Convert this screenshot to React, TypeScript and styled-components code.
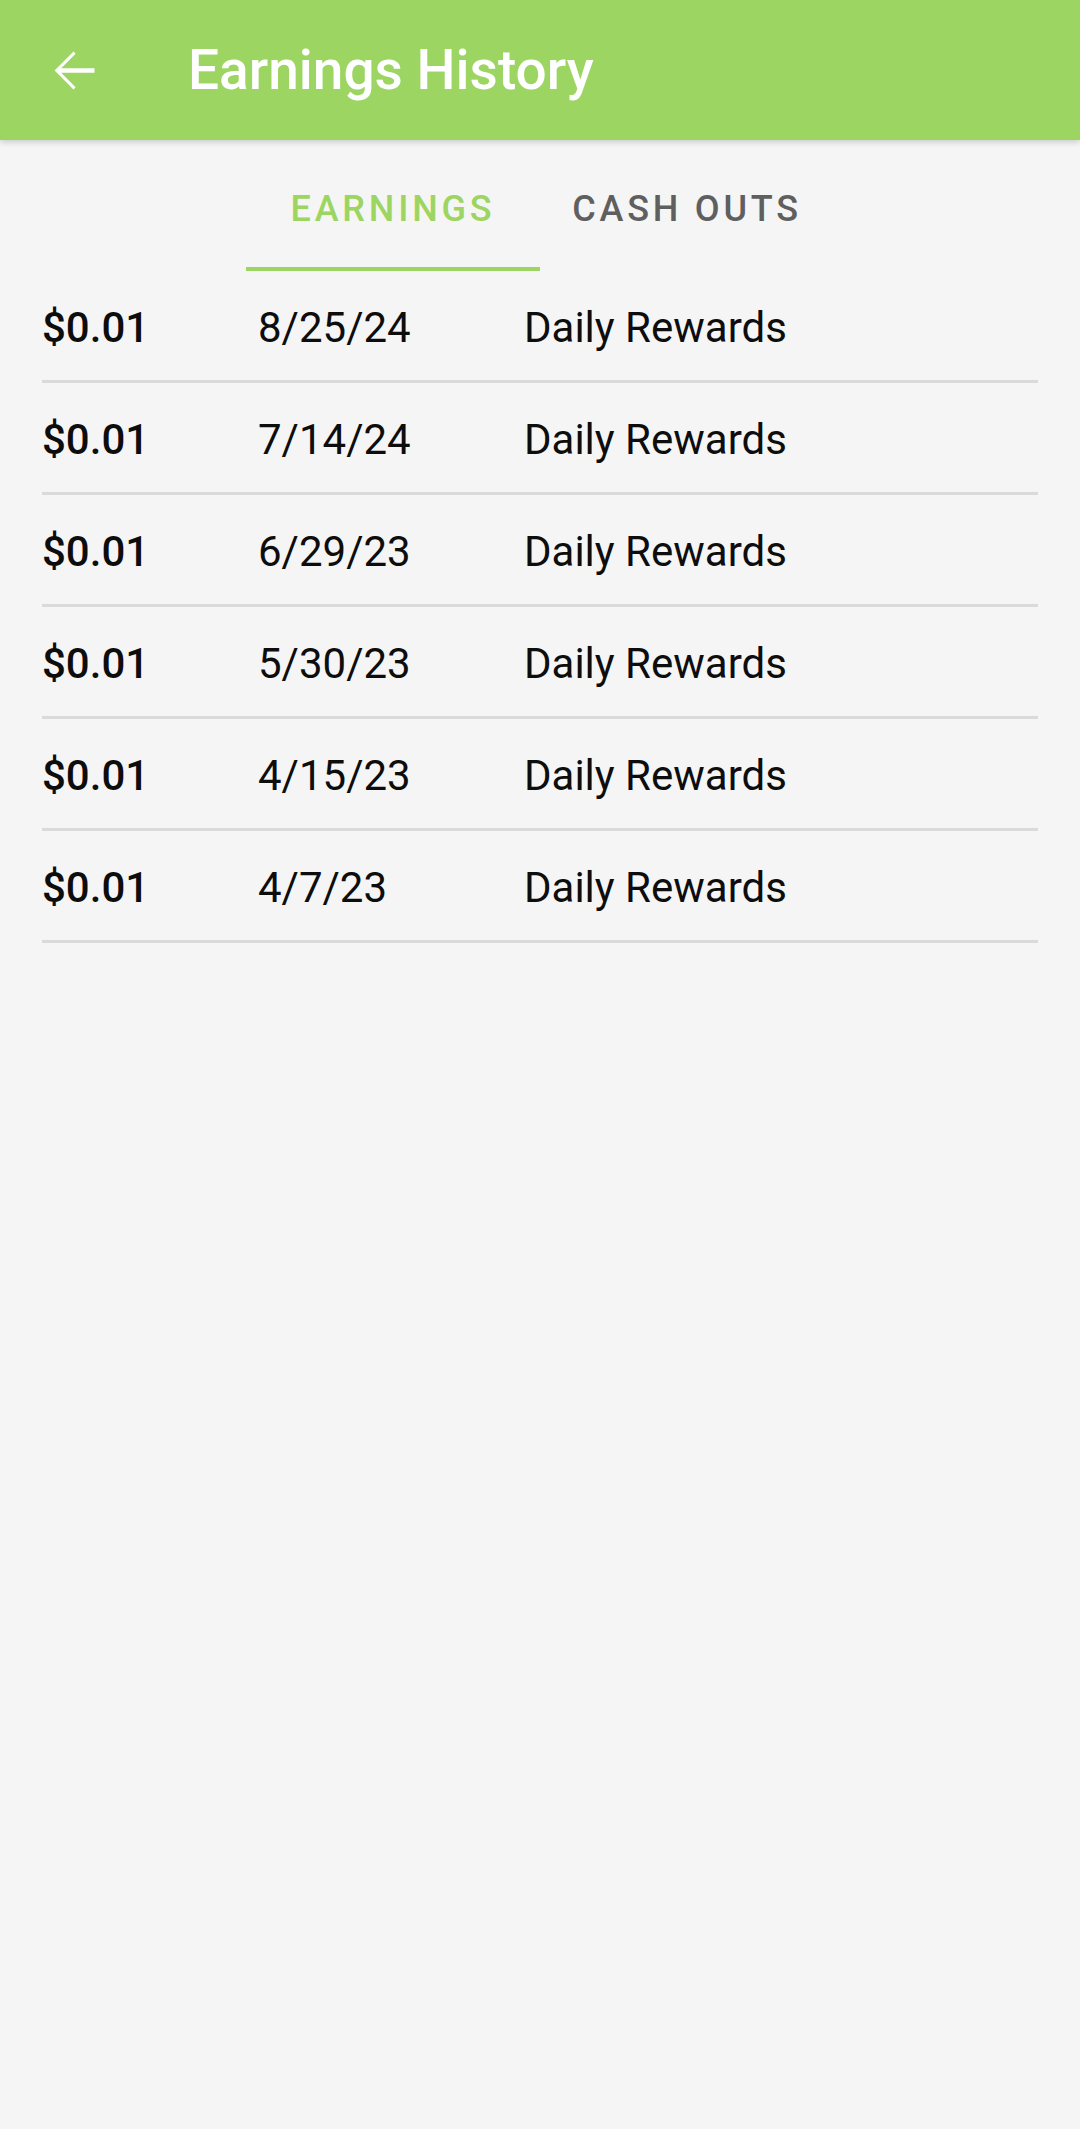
import { FC } from "react";
import styled, { createGlobalStyle } from "styled-components";

const GlobalStyle = createGlobalStyle`
  html, body {
    margin: 0;
    padding: 0;
    background: #f5f5f5;
    font-family: Roboto, "Noto Sans", "Liberation Sans", sans-serif;
  }
`;

const GREEN = "#9cd561";

interface Earning {
  amount: string;
  date: string;
  source: string;
}

const earnings: Earning[] = [
  { amount: "$0.01", date: "8/25/24", source: "Daily Rewards" },
  { amount: "$0.01", date: "7/14/24", source: "Daily Rewards" },
  { amount: "$0.01", date: "6/29/23", source: "Daily Rewards" },
  { amount: "$0.01", date: "5/30/23", source: "Daily Rewards" },
  { amount: "$0.01", date: "4/15/23", source: "Daily Rewards" },
  { amount: "$0.01", date: "4/7/23", source: "Daily Rewards" },
];

const BackIcon: FC = () => (
  <svg width="63" height="63" viewBox="0 0 24 24" fill="#ffffff">
    <path d="M20 11.1H7.3l5.5-5.5L12 4.8 4.8 12l7.2 7.2 0.8-0.8-5.5-5.5H20v-1.8z" />
  </svg>
);

const App: FC = () => {
  return (
    <Page>
      <GlobalStyle />
      <AppBar>
        <BackButton aria-label="Back">
          <BackIcon />
        </BackButton>
        <Title>Earnings History</Title>
      </AppBar>

      <TabBar>
        <Tab active>
          EARNINGS
          <Indicator />
        </Tab>
        <Tab>CASH OUTS</Tab>
      </TabBar>

      <List>
        {earnings.map((e, i) => (
          <Row key={i}>
            <Amount>{e.amount}</Amount>
            <Cell>{e.date}</Cell>
            <Cell>{e.source}</Cell>
          </Row>
        ))}
      </List>
    </Page>
  );
};

export default App;

const Page = styled.div`
  min-height: 2129px;
  background: #f5f5f5;
`;

const AppBar = styled.header`
  position: relative;
  z-index: 1;
  height: 140px;
  display: flex;
  align-items: center;
  background: ${GREEN};
  box-shadow: 0 2px 6px rgba(0, 0, 0, 0.18);
`;

const BackButton = styled.button`
  display: flex;
  align-items: center;
  justify-content: center;
  width: 63px;
  height: 63px;
  margin-left: 42px;
  padding: 0;
  border: none;
  background: transparent;
`;

const Title = styled.h1`
  margin: 0 0 0 83px;
  font-size: 55px;
  font-weight: 500;
  color: #ffffff;
  line-height: 1;
`;

const TabBar = styled.nav`
  display: flex;
  justify-content: center;
  height: 131px;
`;

const Tab = styled.div<{ active?: boolean }>`
  position: relative;
  width: 294px;
  display: flex;
  align-items: center;
  justify-content: center;
  padding-top: 6px;
  box-sizing: border-box;
  font-size: 36px;
  font-weight: 500;
  letter-spacing: 3.8px;
  color: ${(p) => (p.active ? GREEN : "#5f5f5f")};
`;

const Indicator = styled.span`
  position: absolute;
  left: 0;
  right: 0;
  bottom: 0;
  height: 4px;
  background: ${GREEN};
`;

const List = styled.div`
  padding: 0 42px;
`;

const Row = styled.div`
  display: grid;
  grid-template-columns: 216px 266px 1fr;
  align-items: center;
  padding-top: 4px;
  box-sizing: content-box;
  height: 105px;
  border-bottom: 3px solid #dadada;
`;

const Cell = styled.span`
  font-size: 42px;
  font-weight: 400;
  color: #0d0d0d;
`;

const Amount = styled(Cell)`
  font-weight: 500;
`;
